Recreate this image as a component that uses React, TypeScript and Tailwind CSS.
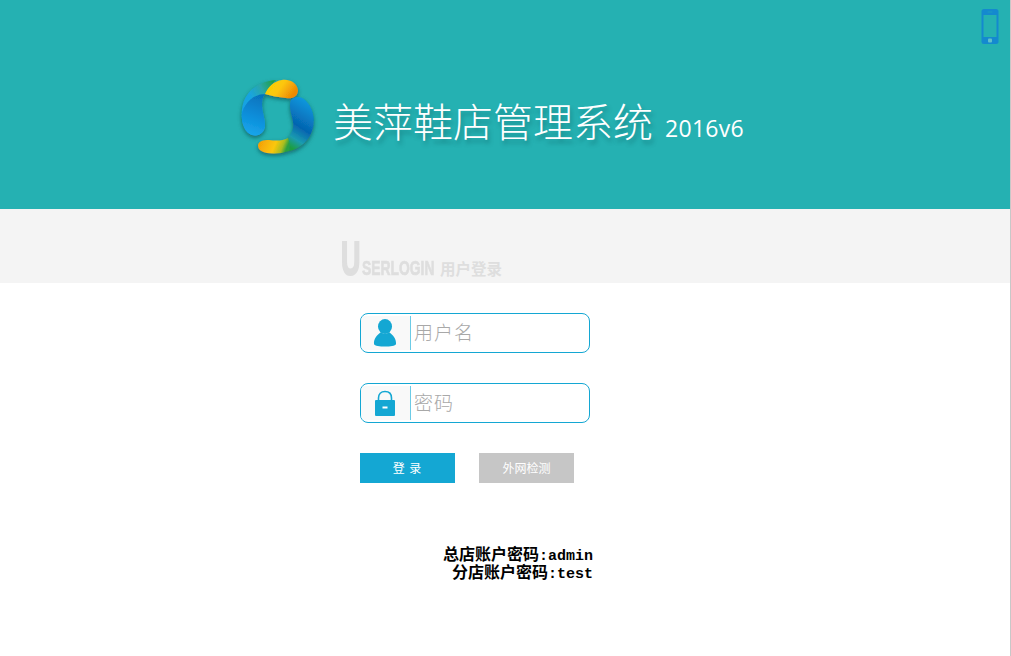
import React from 'react'

const CJK = "font-['Noto_Sans_CJK_SC','Noto_Sans',sans-serif]"

function Logo() {
  return (
    <svg width="90" height="90" viewBox="0 0 90 90" className="shrink-0">
      <defs>
        <linearGradient id="crescent" x1="0.9" y1="0" x2="0" y2="0.7">
          <stop offset="0" stopColor="#1e9f4a" />
          <stop offset="0.3" stopColor="#2aa7a8" />
          <stop offset="0.6" stopColor="#18a4e0" />
          <stop offset="1" stopColor="#12a0e6" />
        </linearGradient>
        <linearGradient id="leftBody" x1="0.6" y1="0" x2="0.4" y2="1">
          <stop offset="0" stopColor="#0673bd" />
          <stop offset="0.5" stopColor="#0a8cd8" />
          <stop offset="1" stopColor="#19a6ec" />
        </linearGradient>
        <linearGradient id="rightBlue" x1="0.6" y1="0" x2="0.3" y2="1">
          <stop offset="0" stopColor="#0c9ae0" />
          <stop offset="0.55" stopColor="#0564b0" />
          <stop offset="0.8" stopColor="#1a9cb0" />
          <stop offset="1" stopColor="#1f9e3f" />
        </linearGradient>
        <linearGradient id="topYellow" x1="0" y1="0" x2="1" y2="0.4">
          <stop offset="0" stopColor="#f5d400" />
          <stop offset="0.55" stopColor="#fdc60a" />
          <stop offset="1" stopColor="#ee8a05" />
        </linearGradient>
        <linearGradient id="bottomYellow" x1="0" y1="0" x2="1" y2="0.2">
          <stop offset="0" stopColor="#f39a05" />
          <stop offset="0.6" stopColor="#fbc70a" />
          <stop offset="0.85" stopColor="#a9bd20" />
          <stop offset="1" stopColor="#2aa040" />
        </linearGradient>
        <filter id="logoShadow" x="-20%" y="-20%" width="140%" height="140%">
          <feDropShadow dx="0" dy="2" stdDeviation="2" floodColor="#0b4d50" floodOpacity="0.7" />
        </filter>
      </defs>
      <g filter="url(#logoShadow)">
        <path d="M46 10C30 11 16 20 12.500 36C10 48 13 62 22 65C29 67 35 62 35 55C35 48 32 42 32 35C32 30 33 27 35 24C38 19 41 14 46 10Z" fill="url(#crescent)" />
        <path d="M35 24C25 24 16 31 12.300 42C10.500 50 14 63 22 65C29 67 35 62 35 55C35 48 32 42 32 35C32 30 33 27 35 24Z" fill="url(#leftBody)" />
        <path d="M35 24C38 17 44 11 52 10C60 9 67 13 68 20C68 27 62 29 56 28C48 27 41 26 35 24Z" fill="url(#topYellow)" />
        <path d="M62 29C66 26 72 26 76 31C83 38 85 48 83 58C80 70 70 79 59 81C60 76 59 72 58 68C62 63 64 58 63 52C62 46 60 41 60 36C60 33 60 31 62 29Z" fill="url(#rightBlue)" />
        <path d="M28 75C29 71 33 70 39 70C46 71 53 71 58 68C60 72 60 77 59 81C52 83.500 44 84 37 83C32 82 28 80 28 75Z" fill="url(#bottomYellow)" />
      </g>
    </svg>
  )
}

function PhoneIcon() {
  return (
    <svg width="20" height="37" viewBox="0 0 20 37" className="block">
      <rect x="1.500" y="1" width="17" height="35" rx="2.500" fill="#1489cf" />
      <rect x="3.500" y="7" width="13" height="22" fill="#25b1b2" />
      <rect x="7.500" y="3.500" width="5" height="1" fill="#25b1b2" opacity="0.5" />
      <rect x="8" y="30.500" width="4" height="4" rx="1" fill="#5fc0cc" />
    </svg>
  )
}

function UserIcon() {
  return (
    <svg width="24" height="28" viewBox="0 0 24 28" fill="#14a7d3">
      <ellipse cx="12" cy="7.500" rx="7" ry="7.500" />
      <path d="M8 13C4 16 0.500 20 1 25C1.500 27 7 27.500 12 27.500C17 27.500 22.500 27 23 25C23.500 20 20 16 16 13C13.500 15.500 10.500 15.500 8 13Z" />
    </svg>
  )
}

function LockIcon() {
  return (
    <svg width="22" height="27" viewBox="0 0 22 27">
      <path d="M4.500 12V8C4.500 4 7 1.500 11 1.500C15 1.500 17.500 4 17.500 8V12" fill="none" stroke="#14a7d3" strokeWidth="1.600" />
      <rect x="1" y="10" width="20" height="16" rx="1" fill="#14a7d3" />
      <rect x="8.500" y="16.500" width="5" height="2" fill="#ffffff" />
    </svg>
  )
}

function Field({ icon, hint }: { icon: React.ReactNode; hint: string }) {
  return (
    <div className="flex h-10 w-[230px] overflow-hidden rounded-lg border border-[#14a7d3] bg-white">
      <div className="my-[2px] flex w-[49px] items-center justify-center bg-[#f9f9f9] pr-px">{icon}</div>
      <div className="my-[2px] w-px bg-[#6ccbe6]" />
      <span className={`pl-[3px] text-[19px] font-light leading-[36px] tracking-[1px] text-[#a8a8a8] ${CJK}`}>{hint}</span>
    </div>
  )
}

export default function App() {
  return (
    <div className="h-[656px] w-[1011px] overflow-hidden border-r border-[#c8c8c8] bg-white">
      {/* Header */}
      <header className="relative flex h-[209px] items-start bg-[#25b1b2] pl-[230px] pt-[70px]">
        <Logo />
        <h1 className={`ml-[13px] mt-[20px] text-[40px] font-light leading-[60px] text-white [text-shadow:2px_4px_4px_rgba(10,90,95,0.45)] ${CJK}`}>
          美萍鞋店管理系统
        </h1>
        <span className="ml-[12px] mt-[40px] font-['Open_Sans',sans-serif] text-[23px] leading-[36px] tracking-[0.3px] text-white">
          2016v6
        </span>
        <div className="absolute right-[10px] top-[8px]">
          <PhoneIcon />
        </div>
      </header>

      {/* Band with the faded heading */}
      <div className="flex h-[74px] items-end bg-[#f4f4f4] pb-[5px] pl-[341px]">
        <span className="w-[21px] origin-left scale-x-[0.56] font-['Liberation_Sans',sans-serif] text-[48px] font-bold leading-[38px] text-[#dedede] [-webkit-text-stroke:2px_#dedede]">
          U
        </span>
        <span className="w-[78px] origin-left scale-x-[0.66] whitespace-nowrap font-['Liberation_Sans',sans-serif] text-[21px] font-bold leading-[20px] text-[#dedede] [-webkit-text-stroke:0.7px_#dedede]">
          SERLOGIN
        </span>
        <span className={`whitespace-nowrap text-[15.500px] font-bold leading-[20px] text-[#dedede] ${CJK}`}>用户登录</span>
      </div>

      {/* Login form */}
      <main className="flex flex-col gap-[30px] pl-[360px] pt-[30px]">
        <Field icon={<UserIcon />} hint="用户名" />
        <Field icon={<LockIcon />} hint="密码" />
        <div className="flex gap-6">
          <button className={`h-[30px] w-[95px] bg-[#14a7d3] text-xs tracking-[1px] text-white ${CJK}`}>登 录</button>
          <button className={`h-[30px] w-[95px] bg-[#c6c6c6] text-xs text-white ${CJK}`}>外网检测</button>
        </div>
      </main>

      <div className="mt-[64px] w-[593px] text-right font-['Liberation_Mono','Noto_Sans_CJK_SC',monospace] text-[15px] font-bold text-black">
        <p className="h-[18px] leading-[18px]">
          <span className="text-base leading-[18px]">总店账户密码</span>:admin
        </p>
        <p className="h-[18px] leading-[18px]">
          <span className="text-base leading-[18px]">分店账户密码</span>:test
        </p>
      </div>
    </div>
  )
}
